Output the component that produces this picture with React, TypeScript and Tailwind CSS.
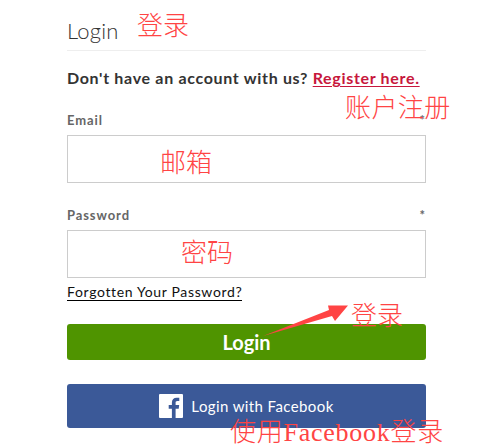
import React from "react";

const note = "absolute text-[#f44] leading-none font-['Liberation_Serif','Noto_Sans_CJK_SC',serif] font-light whitespace-nowrap";

export default function App() {
  return (
    <div className="relative w-[481px] h-[448px] overflow-hidden bg-white font-['Lato','Open_Sans',sans-serif]">
      <div className="flex flex-col w-[359px] ml-[67px] pt-[18px]">
        <h1 className="h-[33px] border-b border-[#eeeeee] text-[22px] leading-[26px] font-light text-[#333] tracking-[0.2px]">Login</h1>
        <p className="mt-[17px] h-[20px] text-[16px] leading-[20px] font-bold text-[#333] whitespace-nowrap tracking-[0.68px]">
          Don't have an account with us?{" "}
          <a className="text-[#c7173c] underline underline-offset-2">Register here.</a>
        </p>
        <div className="mt-[23px] h-[19px] flex justify-between text-[13px] leading-[19px] font-bold text-[#666] tracking-[0.9px]">
          <span>Email</span>
          <span>*</span>
        </div>
        <div className="mt-[5px] h-[48px] border border-[#cccccc] bg-white" />
        <div className="mt-[23px] h-[19px] flex justify-between text-[13px] leading-[19px] font-bold text-[#666] tracking-[0.9px]">
          <span>Password</span>
          <span>*</span>
        </div>
        <div className="mt-[5px] h-[48px] border border-[#cccccc] bg-white" />
        <div className="mt-[4px] self-start h-[19px] border-b border-black text-[14px] leading-[19px] text-[#111] whitespace-nowrap tracking-[0.65px]">
          Forgotten Your Password?
        </div>
        <button className="mt-[23px] h-[36px] w-full rounded-[3px] bg-[#4f9400] text-[20px] font-bold text-white flex items-center justify-center">
          Login
        </button>
        <button className="mt-[24px] h-[44px] w-full rounded-[3px] bg-[#3b5998] text-[15px] text-white flex items-center justify-center gap-[8px] tracking-[0.4px]">
          <svg width="24" height="24" viewBox="0 0 24 24">
            <rect width="24" height="24" rx="1" fill="#fff" />
            <path d="M16.6 24v-9.3h3.1l.5-3.6h-3.6V8.800c0-1 .3-1.800 1.800-1.800h1.900V3.800c-.3 0-1.400-.1-2.700-.1-2.800 0-4.700 1.700-4.700 4.800v2.600H9.700v3.600h3.200V24z" fill="#3b5998" />
          </svg>
          <span>Login with Facebook</span>
        </button>
      </div>

      <span className={note + " left-[137px] top-[14px] text-[26px]"}>登录</span>
      <span className={note + " left-[345px] top-[96px] text-[26px] tracking-[0.4px]"}>账户注册</span>
      <span className={note + " left-[160px] top-[151px] text-[26px]"}>邮箱</span>
      <span className={note + " left-[181px] top-[241px] text-[26px]"}>密码</span>
      <span className={note + " left-[351px] top-[304px] text-[26px]"}>登录</span>
      <span className={note + " left-[230px] top-[420px] text-[26px] tracking-[0.75px]"}>使用Facebook登录</span>

      <svg className="absolute left-[260px] top-[300px]" width="90" height="40" viewBox="0 0 90 40">
        <path d="M3 36 L69 10 L68 5.500 L88 5.500 L75 21 L72 16 Z" fill="#f44" />
      </svg>
    </div>
  );
}
